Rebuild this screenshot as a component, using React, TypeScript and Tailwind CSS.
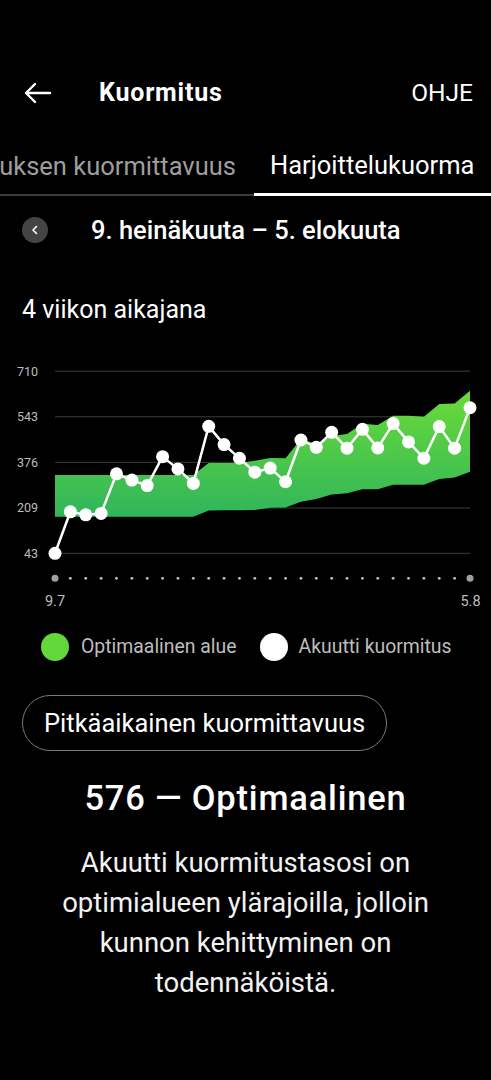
import React from "react";

// acute load per day, 9.7 – 5.8
const acute = [
  43, 195, 184, 189, 334, 311, 291, 397, 352, 299, 508, 441, 391, 340, 355,
  305, 458, 431, 486, 428, 497, 429, 518, 451, 391, 507, 428, 576,
];

// optimal range [low, high] per day
const band: [number, number][] = [
  [177, 330], [177, 330], [177, 330], [177, 330], [177, 330], [177, 330],
  [177, 330], [177, 330], [177, 330], [177, 330], [200, 374], [201, 374],
  [201, 374], [202, 382], [210, 392], [211, 391], [232, 462], [242, 443],
  [258, 473], [263, 480], [278, 517], [278, 513], [294, 547], [294, 547],
  [294, 543], [315, 590], [321, 592], [342, 638],
];

const ticks = [710, 543, 376, 209, 43];

const X0 = 55;
const X1 = 470;
const step = (X1 - X0) / (acute.length - 1);
const px = (i: number) => X0 + i * step;
const py = (v: number) => 199.3 - ((v - 43) / 167) * 45.6;

function LoadChart() {
  const top = band.map(([, hi], i) => `${px(i)},${py(hi)}`);
  const bottom = band
    .map(([lo], i) => `${px(i)},${py(lo)}`)
    .reverse();
  const line = acute.map((v, i) => `${px(i)},${py(v)}`).join(" ");

  return (
    <svg width="491" height="260" viewBox="0 0 491 260" className="block">
      <defs>
        <linearGradient id="bandFill" x1="0" y1="35" x2="0" y2="163" gradientUnits="userSpaceOnUse">
          <stop offset="0" stopColor="#6bdc36" />
          <stop offset="1" stopColor="#30b55c" />
        </linearGradient>
      </defs>

      {ticks.map((t) => (
        <g key={t}>
          <line x1={X0} x2={X1} y1={py(t)} y2={py(t)} stroke="#3d3d3d" strokeWidth="1" />
          <text
            x="38"
            y={py(t) + 4.5}
            textAnchor="end"
            fontSize="12.5"
            fill="#bdbdbd"
            fontFamily="Roboto, sans-serif"
          >
            {t}
          </text>
        </g>
      ))}

      <polygon points={[...top, ...bottom].join(" ")} fill="url(#bandFill)" />

      <polyline points={line} fill="none" stroke="#ffffff" strokeWidth="2.5" strokeLinejoin="round" />
      {acute.map((v, i) => (
        <circle key={i} cx={px(i)} cy={py(v)} r="6.5" fill="#ffffff" />
      ))}

      {acute.map((_, i) => {
        const end = i === 0 || i === acute.length - 1;
        return (
          <circle
            key={i}
            cx={px(i)}
            cy="224.3"
            r={end ? 3.5 : 1.4}
            fill={end ? "#a0a0a0" : "#c4c4c4"}
          />
        );
      })}

      <text x={X0} y="251.5" textAnchor="middle" fontSize="14.5" fill="#bdbdbd" fontFamily="Roboto, sans-serif">
        9.7
      </text>
      <text x={X1 + 0.5} y="251.5" textAnchor="middle" fontSize="14.5" fill="#bdbdbd" fontFamily="Roboto, sans-serif">
        5.8
      </text>
    </svg>
  );
}

export default function App() {
  return (
    <div
      className="min-h-screen w-[491px] overflow-hidden bg-black pt-[65px] text-white"
      style={{ fontFamily: "Roboto, 'Noto Sans', sans-serif" }}
    >
      {/* Header */}
      <div className="flex h-[56px] items-center">
        <button className="ml-[24px] flex h-[24px] w-[28px] items-center">
          <svg width="28" height="22" viewBox="0 0 28 22">
            <path
              d="M2 11H26M11 2L2 11L11 20"
              fill="none"
              stroke="#fff"
              strokeWidth="2.4"
              strokeLinecap="round"
              strokeLinejoin="round"
            />
          </svg>
        </button>
        <h1 className="ml-[47px] text-[25px] font-bold tracking-[0.8px]">Kuormitus</h1>
        <span className="ml-auto mr-[18px] text-[24.5px]">OHJE</span>
      </div>

      {/* Tabs */}
      <div className="flex items-end pt-[16px]">
        <div className="flex h-[58px] w-[254px] items-center justify-end overflow-hidden whitespace-nowrap border-b-2 border-[#3c3c3c] pr-[18px] text-[25.5px] text-[#9e9e9e]">
          Harjoituksen kuormittavuus
        </div>
        <div className="flex h-[59px] flex-1 items-center whitespace-nowrap border-b-[3px] border-white pl-[16px] text-[25.5px]">
          Harjoittelukuorma
        </div>
      </div>

      {/* Date range */}
      <div className="mt-[8px] flex h-[52px] items-center">
        <button className="ml-[22px] flex h-[26px] w-[26px] items-center justify-center rounded-full bg-[#444444]">
          <svg width="10" height="10" viewBox="0 0 10 10">
            <path d="M6.5 1.5L3 5l3.5 3.5" fill="none" stroke="#fff" strokeWidth="1.6" strokeLinecap="round" strokeLinejoin="round" />
          </svg>
        </button>
        <span className="ml-[43px] text-[25.5px] font-medium">9. heinäkuuta – 5. elokuuta</span>
      </div>

      {/* Period */}
      <div className="mt-[39px] flex h-[30px] items-center pl-[22px] text-[25px]">4 viikon aikajana</div>

      <div className="mt-[29px]">
        <LoadChart />
      </div>

      {/* Legend */}
      <div className="mt-[18px] flex h-[30px] items-center pl-[41px] text-[19.4px] text-[#bdbdbd]">
        <span className="h-[28px] w-[28px] rounded-full bg-[#62d83c]" />
        <span className="ml-[12px]">Optimaalinen alue</span>
        <span className="ml-[23px] h-[28px] w-[28px] rounded-full bg-white" />
        <span className="ml-[11px]">Akuutti kuormitus</span>
      </div>

      {/* Long-term button */}
      <button className="ml-[22px] mt-[33px] flex h-[56px] items-center rounded-full border border-[#7a7a7a] px-[21px] text-[25.5px]">
        Pitkäaikainen kuormittavuus
      </button>

      {/* Status */}
      <div className="mt-[28px] flex h-[40px] items-center justify-center text-[34.5px] font-medium tracking-[0.8px]">
        576 — Optimaalinen
      </div>

      <p className="mt-[24px] text-center text-[27.5px] leading-[40px] text-[#f2f2f2]">
        Akuutti kuormitustasosi on
        <br />
        optimialueen ylärajoilla, jolloin
        <br />
        kunnon kehittyminen on
        <br />
        todennäköistä.
      </p>
    </div>
  );
}
